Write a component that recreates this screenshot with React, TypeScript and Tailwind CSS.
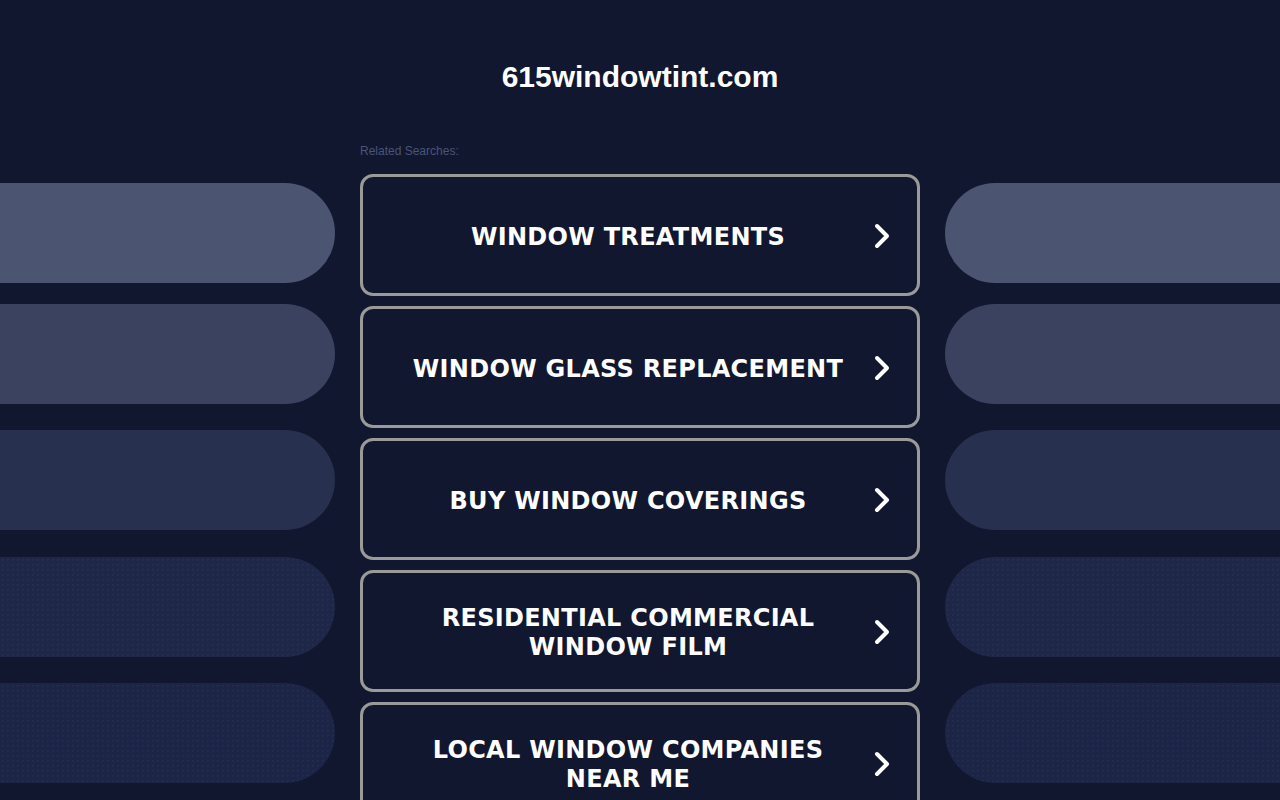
import React from 'react';

const searches = [
  'WINDOW TREATMENTS',
  'WINDOW GLASS REPLACEMENT',
  'BUY WINDOW COVERINGS',
  'RESIDENTIAL COMMERCIAL WINDOW FILM',
  'LOCAL WINDOW COMPANIES NEAR ME',
];

// side decoration pills, top to bottom (colour + top gap)
const pills = [
  { bg: 'bg-[#4b5572]', gap: 'mt-0', dots: false },
  { bg: 'bg-[#3a4260]', gap: 'mt-[21px]', dots: false },
  { bg: 'bg-[#283050]', gap: 'mt-[26px]', dots: false },
  { bg: 'bg-[#1e2747]', gap: 'mt-[27px]', dots: true },
  { bg: 'bg-[#1c2546]', gap: 'mt-[26px]', dots: true },
];

const Chevron = () => (
  <svg width="18" height="28" viewBox="0 0 18 28" fill="none" className="shrink-0">
    <path d="M4 4 L14 14 L4 24" stroke="#ffffff" strokeWidth="4" strokeLinecap="round" strokeLinejoin="round" />
  </svg>
);

const SidePills: React.FC<{ side: 'left' | 'right' }> = ({ side }) => (
  <div className="flex flex-col pt-[183px]">
    {pills.map((p, i) => (
      <div
        key={i}
        className={`h-[100px] ${p.gap} ${p.bg} ${
          side === 'left' ? 'rounded-r-[50px]' : 'rounded-l-[50px]'
        } ${
          p.dots
            ? 'bg-[radial-gradient(rgba(60,80,130,0.18)_1px,transparent_1px)] bg-[size:5px_5px]'
            : ''
        }`}
      />
    ))}
  </div>
);

export default function App() {
  return (
    <div className="min-h-[800px] h-[800px] overflow-hidden bg-[#11172e] font-['Liberation_Sans',Arial,sans-serif]">
      <div className="grid grid-cols-[335px_560px_335px] gap-x-[25px]">
        <SidePills side="left" />
        <div className="flex flex-col">
          <h1 className="pt-[59px] text-center text-[30px] leading-[36px] font-bold text-white">
            615windowtint.com
          </h1>
          <div className="mt-[49px] text-[12px] leading-[14px] text-[#4a5478]">Related Searches:</div>
          <div className="mt-[16px] flex flex-col gap-[10px]">
            {searches.map((s) => (
              <a
                key={s}
                href="#"
                className="flex h-[122px] items-center rounded-[13px] border-[3px] border-[#9a9a9a] bg-[#11172e] pl-[37px] pr-[26px]"
              >
                <span className="flex-1 pt-[4px] text-center text-[24px] leading-[29px] font-bold tracking-[0.3px] text-white font-['DejaVu_Sans',Verdana,sans-serif]">
                  {s}
                </span>
                <span className="ml-[17px] pt-[2px]">
                  <Chevron />
                </span>
              </a>
            ))}
          </div>
        </div>
        <SidePills side="right" />
      </div>
    </div>
  );
}
